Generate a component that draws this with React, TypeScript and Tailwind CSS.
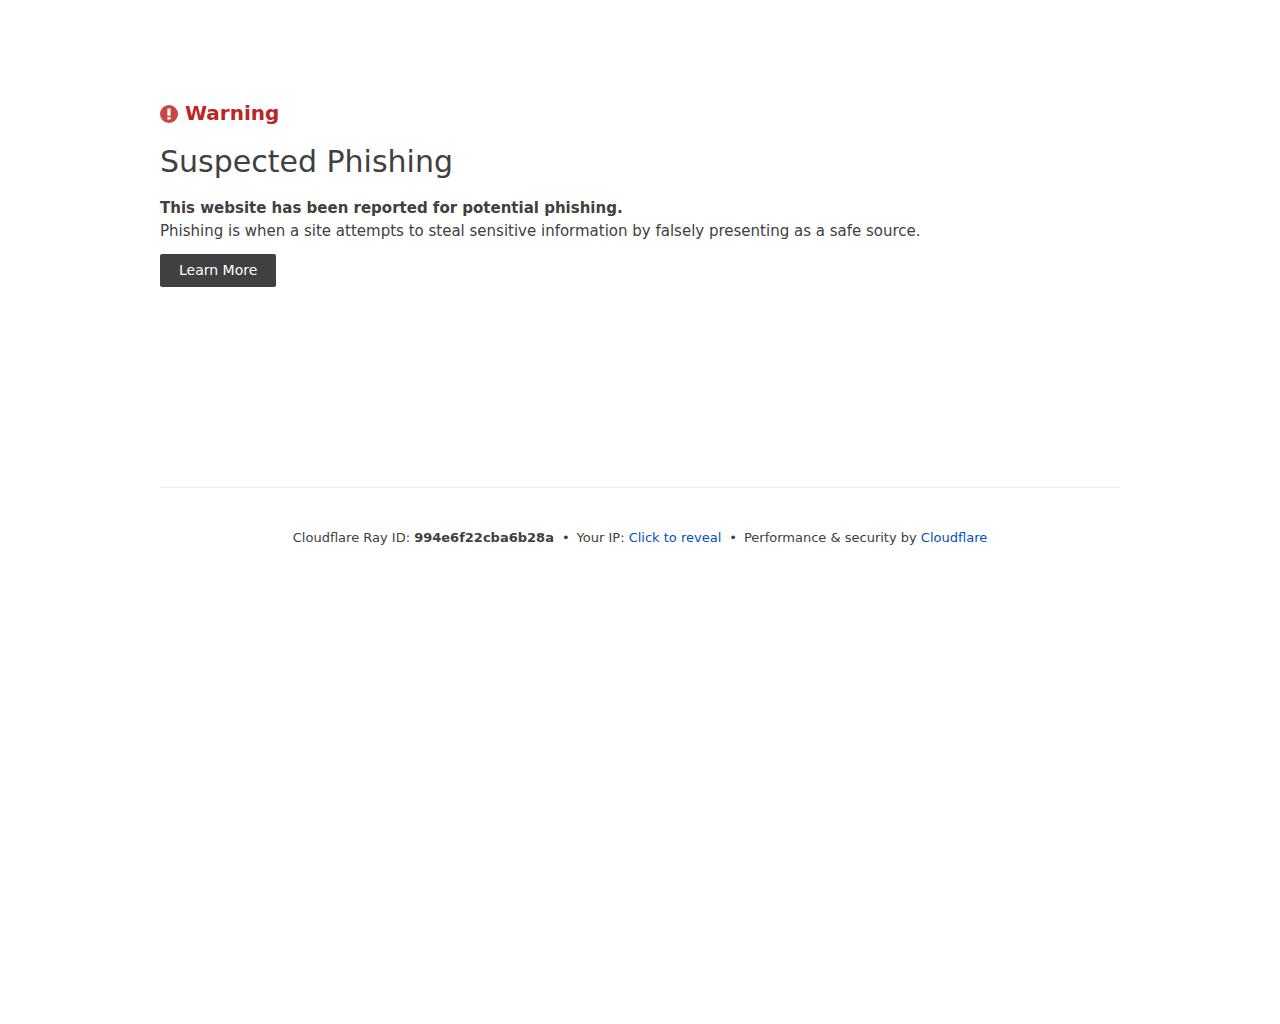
export default function App() {
  return (
    <div className="min-h-screen bg-white text-[#404040] text-[15px] leading-[23px] font-['DejaVu_Sans',sans-serif]">
      <div className="mx-auto max-w-[960px] pt-[100px]">
        <header>
          <h1 className="flex items-center gap-[7px] text-xl leading-[26px] font-bold text-[#bd2426]">
            <svg className="mt-[2px] h-[18px] w-[18px]" viewBox="0 0 18 18" aria-hidden="true">
              <circle cx="9" cy="9" r="9" fill="#c94444" />
              <path d="M7.4 3.4h3.2v7.4H7.4zM7.4 12h3.2v2.6H7.4z" fill="#fff" />
            </svg>
            Warning
          </h1>
          <h2 className="mt-4 text-[30px] leading-[39px]">Suspected Phishing</h2>
        </header>

        <main className="mt-4 pb-[200px]">
          <strong>This website has been reported for potential phishing.</strong>
          <p>Phishing is when a site attempts to steal sensitive information by falsely presenting as a safe source.</p>
          <a
            href="https://www.cloudflare.com/learning/access-management/phishing-attack/"
            className="mt-[11px] block w-fit rounded-xs bg-[#404040] px-[19px] py-[6px] text-sm leading-[21px] text-white"
          >
            Learn More
          </a>
        </main>

        <footer className="border-t border-[#ebebeb] pt-10 text-center text-[13px] leading-5">
          <span>
            Cloudflare Ray ID: <strong>994e6f22cba6b28a</strong>
          </span>
          <span className="mr-[7px] ml-2">&bull;</span>
          <span>
            Your IP: <button type="button" className="text-[#0051c3]">Click to reveal</button>
          </span>
          <span className="mr-[7px] ml-2">&bull;</span>
          <span>
            Performance &amp; security by <a href="https://www.cloudflare.com/" className="text-[#0051c3]">Cloudflare</a>
          </span>
        </footer>
      </div>
    </div>
  );
}
